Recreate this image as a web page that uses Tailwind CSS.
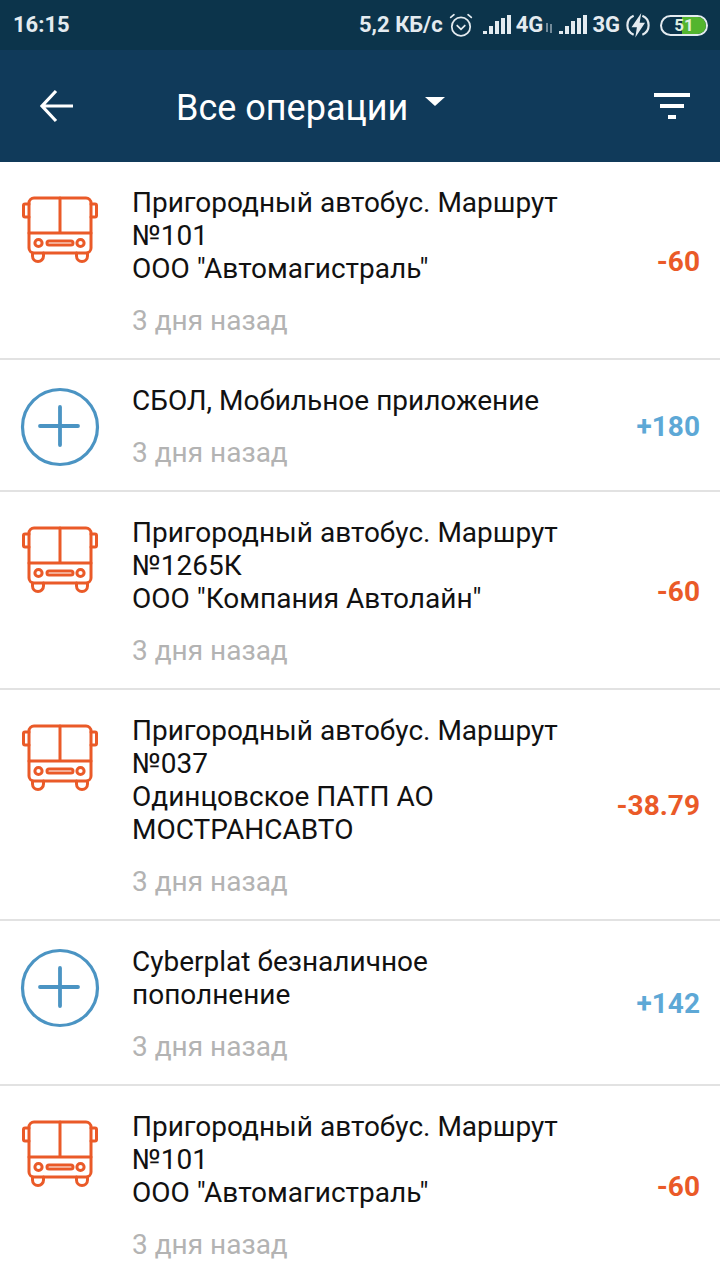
<!doctype html>
<html lang="ru">
<head>
<meta charset="utf-8">
<script src="https://cdn.jsdelivr.net/npm/@tailwindcss/browser@4"></script>
</head>
<body class="m-0 bg-white">
<svg class="hidden">
<symbol id="bus" viewBox="0 0 80 70">
<g fill="none" stroke="#ea5a28" stroke-width="3" stroke-linejoin="round" stroke-linecap="round">
<rect x="9" y="3" width="62" height="55" rx="5"/>
<path d="M9 9H5a1.500 1.500 0 0 0-1.500 1.500v10A1.500 1.500 0 0 0 5 22h4M71 9h4a1.500 1.500 0 0 1 1.500 1.500v10A1.500 1.500 0 0 1 75 22h-4"/>
<path d="M40 3v35M9 38h62"/>
<circle cx="18.500" cy="48" r="3.600"/><circle cx="60.500" cy="48" r="3.600"/>
<rect x="27" y="46" width="26" height="4" rx="2"/>
<path d="M12.500 58v3a5.500 5.500 0 0 0 11 0v-3M56.500 58v3a5.500 5.500 0 0 0 11 0v-3"/>
</g>
</symbol>
<symbol id="plus" viewBox="0 0 80 80">
<g fill="none" stroke="#4b94c3" stroke-width="3.200" stroke-linecap="round">
<circle cx="40" cy="40" r="37.500"/>
<path d="M40 20v38M20 39h38" stroke-width="3.800"/>
</g>
</symbol>
</svg>

<div class="w-[720px] h-[1280px] overflow-hidden font-['Roboto',sans-serif]">
  <!-- status bar -->
  <div class="h-[50px] bg-[#0c344b] flex items-center pl-[13px] pr-[12px] text-[#e4ebf0] font-bold">
    <span class="text-[22px] leading-none">16:15</span>
    <div class="ml-auto flex items-center">
      <span class="text-[22px] leading-none">5,2 КБ/с</span>
      <svg class="ml-[5px]" width="26" height="26" viewBox="0 0 24 24" fill="none" stroke="#e4ebf0" stroke-width="1.600" stroke-linecap="round"><circle cx="12" cy="13.500" r="8.500"/><path d="M8.500 12.500l3.500 3.500 3.500-3.500M2.500 5l3-2.500M21.500 5l-3-2.500"/></svg>
      <svg class="ml-[9px]" width="28" height="20" viewBox="0 0 28 20" fill="#e4ebf0"><rect x="0" y="16" width="4" height="3"/><rect x="6" y="11" width="4" height="8"/><rect x="12" y="6" width="4" height="13"/><rect x="18" y="3" width="4" height="16"/><rect x="24" y="0" width="4" height="19"/></svg>
      <span class="ml-[5px] text-[22px] leading-none">4G</span>
      <svg class="ml-[2px] mt-[6px]" width="8" height="10" viewBox="0 0 8 10" fill="none" stroke="#b9c6cf" stroke-width="1.200"><path d="M2 0v9M6 1v9"/></svg>
      <svg class="ml-[6px]" width="28" height="20" viewBox="0 0 28 20" fill="#e4ebf0"><rect x="0" y="16" width="4" height="3"/><rect x="6" y="11" width="4" height="8"/><rect x="12" y="6" width="4" height="13"/><rect x="18" y="3" width="4" height="16"/><rect x="24" y="0" width="4" height="19"/></svg>
      <span class="ml-[5px] text-[22px] leading-none">3G</span>
      <svg class="ml-[5px]" width="26" height="26" viewBox="0 0 24 24" fill="none" stroke="#e4ebf0" stroke-width="2"><path d="M8 3.500A9.500 9.500 0 0 0 8 21M16 3.500A9.500 9.500 0 0 1 16 21"/><path d="M15 1L6 14h5l-1.500 9.500L18.500 10H13.500z" fill="#e4ebf0" stroke="none"/></svg>
      <div class="ml-[9px] relative w-[48px] h-[21px] rounded-full border-2 border-[#e4ebf0] overflow-hidden">
        <div class="absolute right-0 top-0 bottom-0 w-[24px] bg-[#54b52e]"></div>
        <span class="absolute inset-0 flex items-center justify-center text-[17px] font-bold leading-none text-[#dfeee0]">51</span>
      </div>
    </div>
  </div>
  <!-- app bar -->
  <div class="h-[112px] bg-[#103a5a] flex items-center text-white">
    <svg class="ml-[39px] shrink-0" width="35" height="34" viewBox="0 0 35 34" fill="none" stroke="#fff" stroke-width="3.200"><path d="M34 17H3M17 2L3 17l14 15"/></svg>
    <span class="ml-[102px] mt-[4px] text-[36px] leading-none">Все операции</span>
    <span class="ml-[17px] mb-[9px] w-0 h-0 border-x-[10px] border-x-transparent border-t-[9px] border-t-white"></span>
    <div class="ml-auto mr-[30px] mb-[1px] flex flex-col items-center gap-[7px]">
      <div class="w-[36px] h-[4px] bg-white"></div>
      <div class="w-[24px] h-[4px] bg-white"></div>
      <div class="w-[8px] h-[4px] bg-white"></div>
    </div>
  </div>
  <!-- list -->
  <div class="text-[28px] leading-[33px] text-[#111111]">
    <div class="flex border-b-2 border-[#e2e2e2] h-[198px]">
      <div class="w-[132px] shrink-0 pt-[33px] pl-[20px]"><svg width="80" height="70"><use href="#bus"/></svg></div>
      <div class="flex-1 pt-[24px]"><p>Пригородный автобус. Маршрут<br>№101<br>ООО "Автомагистраль"</p><p class="mt-[19px] text-[#b3b3b3]">3 дня назад</p></div>
      <div class="self-center pr-[20px] pt-[2px] font-bold text-[#ea5a28]">-60</div>
    </div>
    <div class="flex border-b-2 border-[#e2e2e2] h-[132px]">
      <div class="w-[132px] shrink-0 pt-[27px] pl-[20px]"><svg width="80" height="80"><use href="#plus"/></svg></div>
      <div class="flex-1 pt-[24px]"><p>СБОЛ, Мобильное приложение</p><p class="mt-[19px] text-[#b3b3b3]">3 дня назад</p></div>
      <div class="self-center pr-[20px] pt-[2px] font-bold text-[#5da8d6]">+180</div>
    </div>
    <div class="flex border-b-2 border-[#e2e2e2] h-[198px]">
      <div class="w-[132px] shrink-0 pt-[33px] pl-[20px]"><svg width="80" height="70"><use href="#bus"/></svg></div>
      <div class="flex-1 pt-[24px]"><p>Пригородный автобус. Маршрут<br>№1265К<br>ООО "Компания Автолайн"</p><p class="mt-[19px] text-[#b3b3b3]">3 дня назад</p></div>
      <div class="self-center pr-[20px] pt-[2px] font-bold text-[#ea5a28]">-60</div>
    </div>
    <div class="flex border-b-2 border-[#e2e2e2] h-[231px]">
      <div class="w-[132px] shrink-0 pt-[33px] pl-[20px]"><svg width="80" height="70"><use href="#bus"/></svg></div>
      <div class="flex-1 pt-[24px]"><p>Пригородный автобус. Маршрут<br>№037<br>Одинцовское ПАТП АО<br>МОСТРАНСАВТО</p><p class="mt-[19px] text-[#b3b3b3]">3 дня назад</p></div>
      <div class="self-center pr-[20px] pt-[2px] font-bold text-[#ea5a28]">-38.79</div>
    </div>
    <div class="flex border-b-2 border-[#e2e2e2] h-[165px]">
      <div class="w-[132px] shrink-0 pt-[27px] pl-[20px]"><svg width="80" height="80"><use href="#plus"/></svg></div>
      <div class="flex-1 pt-[24px]"><p>Cyberplat безналичное<br>пополнение</p><p class="mt-[19px] text-[#b3b3b3]">3 дня назад</p></div>
      <div class="self-center pr-[20px] pt-[2px] font-bold text-[#5da8d6]">+142</div>
    </div>
    <div class="flex h-[198px]">
      <div class="w-[132px] shrink-0 pt-[33px] pl-[20px]"><svg width="80" height="70"><use href="#bus"/></svg></div>
      <div class="flex-1 pt-[24px]"><p>Пригородный автобус. Маршрут<br>№101<br>ООО "Автомагистраль"</p><p class="mt-[19px] text-[#b3b3b3]">3 дня назад</p></div>
      <div class="self-center pr-[20px] pt-[2px] font-bold text-[#ea5a28]">-60</div>
    </div>
  </div>
</div>
</body>
</html>
